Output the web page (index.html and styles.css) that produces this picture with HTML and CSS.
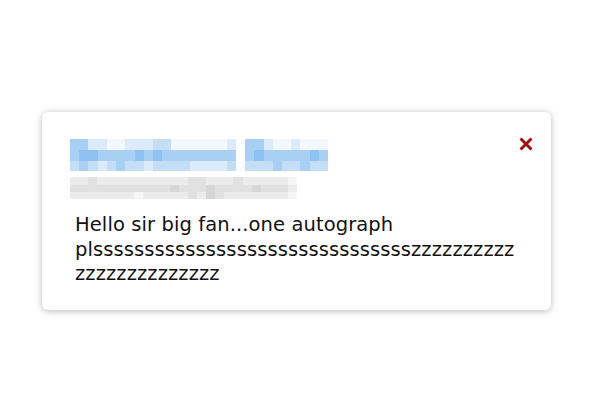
FILE: index.html
```html
<!DOCTYPE html>
<html lang="en">
<head>
<meta charset="utf-8">
<title>Message</title>
<link rel="stylesheet" href="styles.css">
</head>
<body>
<div class="card">
  <div class="card-head">
    <div class="sender">
      <div class="mosaic name" aria-label="blurred name">
        <span class="b3"></span><span class="b3"></span><span class="b1"></span><span class="b1"></span><span class="b0"></span><span class="b0"></span><span class="b1"></span><span class="b1"></span><span class="b1"></span><span class="b2"></span><span class="b2"></span><span class="b0"></span><span class="b0"></span><span class="b0"></span><span class="b0"></span><span class="b0"></span><span class="b0"></span><span class="b1"></span><span class="bx"></span><span class="b3"></span><span class="b3"></span><span class="b1"></span><span class="b0"></span><span class="b0"></span><span class="b1"></span><span class="b0"></span><span class="b0"></span><span class="b0"></span>
        <span class="b3"></span><span class="b4"></span><span class="b4"></span><span class="b3"></span><span class="b3"></span><span class="b3"></span><span class="b3"></span><span class="b4"></span><span class="b3"></span><span class="b4"></span><span class="b3"></span><span class="b3"></span><span class="b3"></span><span class="b3"></span><span class="b3"></span><span class="b3"></span><span class="b3"></span><span class="b3"></span><span class="bx"></span><span class="b3"></span><span class="b4"></span><span class="b3"></span><span class="b3"></span><span class="b3"></span><span class="b3"></span><span class="b3"></span><span class="b4"></span><span class="b3"></span>
        <span class="b2"></span><span class="b3"></span><span class="b2"></span><span class="b1"></span><span class="b2"></span><span class="b3"></span><span class="b2"></span><span class="b2"></span><span class="b1"></span><span class="b2"></span><span class="b2"></span><span class="b2"></span><span class="b2"></span><span class="b1"></span><span class="b1"></span><span class="b1"></span><span class="b1"></span><span class="b2"></span><span class="bx"></span><span class="b2"></span><span class="b2"></span><span class="b2"></span><span class="b3"></span><span class="b2"></span><span class="b2"></span><span class="b3"></span><span class="b2"></span><span class="b2"></span>
      </div>
      <div class="mosaic email" aria-label="blurred email">
        <span class="g1"></span><span class="g1"></span><span class="g2"></span><span class="g1"></span><span class="g1"></span><span class="g1"></span><span class="g1"></span><span class="g1"></span><span class="g1"></span><span class="g1"></span><span class="g1"></span><span class="g1"></span><span class="g1"></span><span class="g2"></span><span class="g2"></span><span class="g1"></span><span class="g1"></span><span class="g1"></span><span class="g2"></span><span class="g1"></span><span class="g1"></span><span class="g1"></span><span class="g1"></span><span class="g1"></span><span class="g0"></span>
        <span class="g2"></span><span class="g2"></span><span class="g2"></span><span class="g2"></span><span class="g2"></span><span class="g2"></span><span class="g2"></span><span class="g2"></span><span class="g2"></span><span class="g2"></span><span class="g2"></span><span class="g3"></span><span class="g2"></span><span class="g2"></span><span class="g2"></span><span class="g3"></span><span class="g2"></span><span class="g2"></span><span class="g2"></span><span class="g2"></span><span class="g3"></span><span class="g2"></span><span class="g2"></span><span class="g2"></span><span class="g1"></span>
        <span class="g1"></span><span class="g1"></span><span class="g1"></span><span class="g1"></span><span class="g1"></span><span class="g1"></span><span class="g1"></span><span class="g0"></span><span class="g1"></span><span class="g1"></span><span class="g1"></span><span class="g1"></span><span class="g1"></span><span class="g2"></span><span class="g1"></span><span class="g3"></span><span class="g2"></span><span class="g1"></span><span class="g1"></span><span class="g1"></span><span class="g1"></span><span class="g1"></span><span class="g1"></span><span class="g1"></span><span class="g0"></span>
      </div>
    </div>
    <button class="close" type="button" aria-label="Close">
      <svg width="16" height="16" viewBox="0 0 16 16"><path d="M2.5 2.5 L13.5 13.5 M13.5 2.5 L2.5 13.5" stroke="#a30d0d" stroke-width="2.9" fill="none"/></svg>
    </button>
  </div>
  <p class="message">Hello sir big fan...one autograph plssssssssssssssssssssssssssssssszzzzzzzzzzzzzzzzzzzzzzzz</p>
</div>
</body>
</html>
```

FILE: styles.css
```css
html, body {
  margin: 0;
  padding: 0;
  background: #ffffff;
}

body {
  width: 598px;
  height: 400px;
  font-family: "DejaVu Sans", "Noto Sans", sans-serif;
}

.card {
  box-sizing: border-box;
  width: 509px;
  margin: 112px 0 0 42px;
  padding: 27px 17px 23px 28px;
  background: #ffffff;
  border-radius: 6px;
  box-shadow: 0 1px 7px rgba(0, 0, 0, 0.28);
}

.card-head {
  display: flex;
  justify-content: space-between;
  align-items: flex-start;
}

.sender {
  display: flex;
  flex-direction: column;
  gap: 6px;
}

.mosaic {
  display: grid;
}

.mosaic.name {
  width: 258px;
  grid-template-columns: repeat(28, 1fr);
  grid-template-rows: 11px 11px 10px;
}

.mosaic.email {
  width: 227px;
  grid-template-columns: repeat(25, 1fr);
  grid-template-rows: 8px 7px 7px;
}

.b0 { background: #f2f8fe; }
.b1 { background: #dcebfb; }
.b2 { background: #c4def8; }
.b3 { background: #a9cff4; }
.b4 { background: #8ec2f0; }
.bx { background: #fbfdff; }

.g0 { background: #f6f6f6; }
.g1 { background: #ececec; }
.g2 { background: #e1e1e1; }
.g3 { background: #d6d6d6; }

.close {
  display: flex;
  padding: 0;
  margin-top: -3px;
  border: 0;
  background: none;
  cursor: pointer;
}

.message {
  margin: 14px 17px 0 5px;
  font-size: 19.5px;
  line-height: 24.5px;
  letter-spacing: 0.1px;
  color: #111111;
  overflow-wrap: anywhere;
}
```
